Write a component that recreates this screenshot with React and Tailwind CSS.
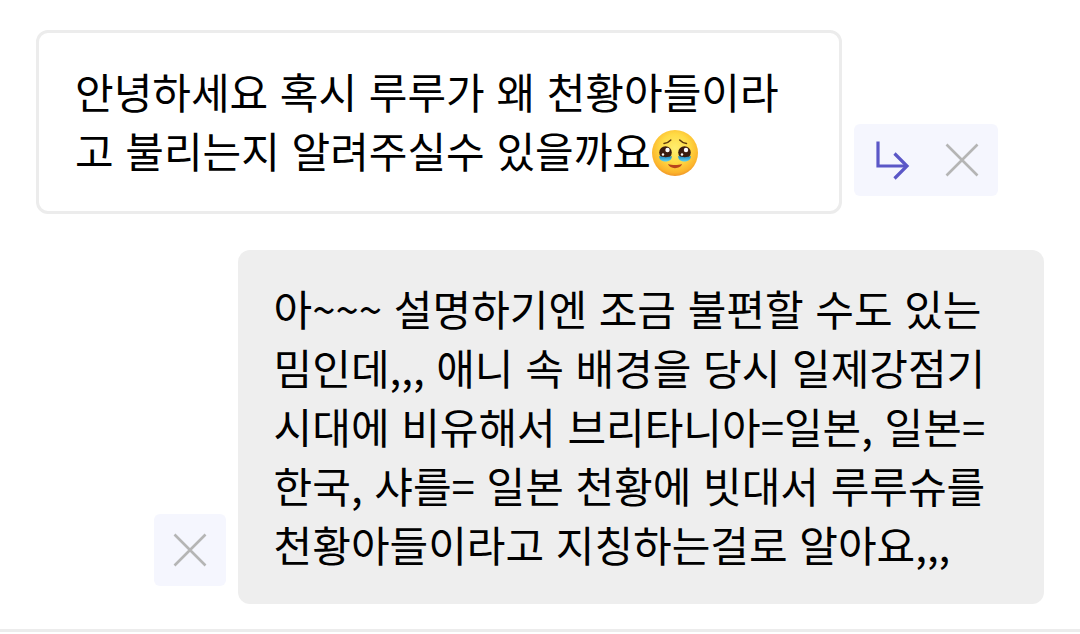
import React from 'react';

function HoldingTearsFace() {
  return (
    <svg
      viewBox="0 0 48 48"
      role="img"
      aria-label="눈물을 참는 얼굴"
      className="inline-block h-12 w-12 align-text-bottom"
    >
      <defs>
        <radialGradient id="face" cx="0.5" cy="0.4" r="0.62">
          <stop offset="0" stopColor="#ffee70" />
          <stop offset="0.5" stopColor="#ffdb45" />
          <stop offset="0.85" stopColor="#fcb42c" />
          <stop offset="1" stopColor="#ec8f28" />
        </radialGradient>
        <linearGradient id="tear" x1="0" y1="0" x2="0" y2="1">
          <stop offset="0" stopColor="#1e86c0" />
          <stop offset="1" stopColor="#5cd3f2" />
        </linearGradient>
      </defs>
      <circle cx="24" cy="24" r="23" fill="url(#face)" />
      {/* brows */}
      <g fill="none" stroke="#5f3a0c" strokeWidth="1.5" strokeLinecap="round">
        <path d="M13 14.5c3-.3 5-1.500 6.800-3.500" />
        <path d="M35.500 14.500c-3-.3-5-1.500-6.800-3.500" />
      </g>
      {/* eyes */}
      <circle cx="14.500" cy="23.500" r="6.300" fill="#3b1d10" />
      <circle cx="33.500" cy="23.500" r="6.300" fill="#3b1d10" />
      <path d="M8.300 27c4 1.500 9 1.500 12.400 0 .5 3-2 5.500-6.200 5.500s-6.800-2.500-6.200-5.500z" fill="url(#tear)" />
      <path d="M27.300 27c4 1.500 9 1.500 12.400 0 .5 3-2 5.500-6.200 5.500s-6.800-2.500-6.200-5.500z" fill="url(#tear)" />
      <g fill="#fff">
        <circle cx="16.500" cy="21" r="2.200" />
        <circle cx="35" cy="21" r="2.200" />
        <circle cx="12" cy="25.500" r="1.200" />
        <circle cx="31" cy="25.500" r="1.200" />
      </g>
      <path d="M17 35c4 1.400 10 1.400 14 0-1.500 5.500-12.500 5.500-14 0z" fill="#b8431c" />
    </svg>
  );
}

function ReplyIcon() {
  return (
    <svg viewBox="0 0 72 72" fill="none" stroke="#5b57c7" strokeWidth="3.2" className="h-full w-full">
      <path d="M24 17.500V42h28" />
      <path d="M40.500 29.500 53 42 40.500 54.500" />
    </svg>
  );
}

function CloseIcon() {
  return (
    <svg viewBox="0 0 72 72" fill="none" stroke="#b5b5b5" strokeWidth="2.6" className="h-full w-full">
      <path d="M20.500 20.500l31 31M51.500 20.500l-31 31" />
    </svg>
  );
}

function Actions({ reply }) {
  return (
    <div className="mb-[18px] flex shrink-0 rounded-md bg-[#f5f6fe]">
      {reply && (
        <button type="button" aria-label="답장" className="h-18 w-18">
          <ReplyIcon />
        </button>
      )}
      <button type="button" aria-label="삭제" className="h-18 w-18">
        <CloseIcon />
      </button>
    </div>
  );
}

// punctuation in the Korean face, the latin one has square commas
function Mark({ children }) {
  return <span className="font-['Noto_Sans_CJK_KR',sans-serif] leading-none">{children}</span>;
}

export default function App() {
  return (
    <main className="border-b-3 border-[#ececec] bg-white px-9 pt-[30px] pb-[25px] font-['Liberation_Sans','Noto_Sans_CJK_KR',sans-serif] text-[42px] leading-[59px] text-black">
      <div className="flex items-end gap-3">
        <p className="w-4/5 rounded-xl border-3 border-[#ececec] px-9 pt-8 pb-7">
          안녕하세요 혹시 루루가 왜 천황아들이라고 불리는지 알려주실수 있을까요
          <HoldingTearsFace />
        </p>
        <Actions reply />
      </div>

      <div className="mt-9 flex items-end justify-end gap-3">
        <Actions />
        <p className="w-4/5 rounded-xl bg-[#eeeeee] px-9 pt-8 pb-[27px]">
          아<Mark>~~~</Mark> 설명하기엔 조금 불편할 수도 있는 밈인데<Mark>,,,</Mark> 애니 속 배경을 당시
          일제강점기 시대에 비유해서 브리타니아<Mark>=</Mark>일본<Mark>,</Mark> 일본<Mark>=</Mark>한국
          <Mark>,</Mark> 샤를<Mark>=</Mark> 일본 천황에 빗대서 루루슈를 천황아들이라고 지칭하는걸로
          알아요<Mark>,,,</Mark>
        </p>
      </div>
    </main>
  );
}
